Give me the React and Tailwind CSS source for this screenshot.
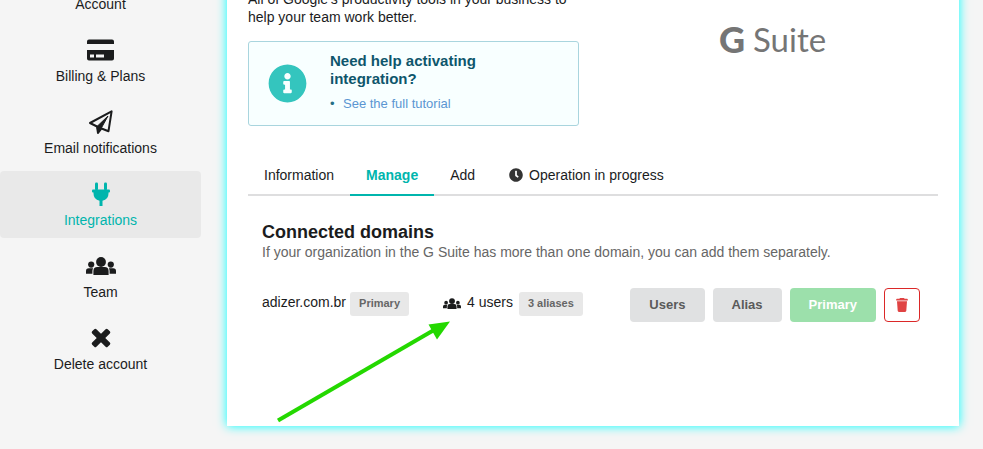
import { useState } from 'react';
import { FaClock, FaInfoCircle, FaUserAlt } from 'react-icons/fa';

function CardIcon({ className }) {
  return (
    <svg viewBox="0 0 27 22" fill="currentColor" className={className} aria-hidden="true">
      <path d="M0 5V2.5A2 2 0 0 1 2 .5h23a2 2 0 0 1 2 2V5z" />
      <path fillRule="evenodd" d="M0 11h27v8.500a2 2 0 0 1-2 2H2a2 2 0 0 1-2-2zM3 15.500v3h4v-3zM9 15.500v3h8v-3z" />
    </svg>
  );
}

function PlaneIcon({ className }) {
  return (
    <svg viewBox="0 0 24 24" fill="none" stroke="currentColor" strokeLinejoin="round" className={className} aria-hidden="true">
      <path d="M1 13 22.600 1.300 19.500 21.200 12.500 18.500 9 23 8 16.500z" strokeWidth="2" />
      <path d="M8 16.500 19 6 12.200 18.300 9 23z" fill="currentColor" strokeWidth="1" />
    </svg>
  );
}

function PlugIcon({ className }) {
  return (
    <svg viewBox="0 0 24 24" fill="currentColor" className={className} aria-hidden="true">
      <rect x="6" y="0.400" width="3" height="8" rx="1.300" />
      <rect x="15" y="0.400" width="3" height="8" rx="1.300" />
      <rect x="3" y="7.400" width="18" height="3" rx="1" />
      <path d="M4.500 10h15v1.500a7.400 7.400 0 0 1-6 7.200V24h-3v-5.300a7.400 7.400 0 0 1-6-7.200z" />
    </svg>
  );
}

function CrossIcon({ className }) {
  return (
    <svg viewBox="0 0 24 24" fill="currentColor" className={className} aria-hidden="true">
      <rect x="1" y="9" width="22" height="6" rx="1.500" transform="rotate(45 12 12)" />
      <rect x="1" y="9" width="22" height="6" rx="1.500" transform="rotate(-45 12 12)" />
    </svg>
  );
}

function TeamIcon({ className }) {
  return (
    <svg viewBox="0 0 30 18" fill="currentColor" className={className} aria-hidden="true">
      <circle cx="15" cy="5" r="4.9" />
      <path d="M7.4 18V14a4 4 0 0 1 4-4h7.2a4 4 0 0 1 4 4v4z" />
      <circle cx="5.2" cy="7.6" r="3.1" />
      <path d="M0 16.8V14a2.8 2.8 0 0 1 2.8-2.8h4.4A5.6 5.6 0 0 0 6.4 14v2.8z" />
      <circle cx="24.8" cy="7.6" r="3.1" />
      <path d="M30 16.8V14a2.8 2.8 0 0 0-2.8-2.8h-4.4a5.6 5.6 0 0 1 .8 2.8v2.8z" />
    </svg>
  );
}

function TrashIcon({ className }) {
  return (
    <svg viewBox="0 0 12 14" fill="currentColor" className={className} aria-hidden="true">
      <path d="M4 0h4l.6.8H11a.8.8 0 0 1 .8.800V2.500H.2V1.600A.8.800 0 0 1 1 .8h2.400z" />
      <path d="M1 3.300h10l-.7 9.500a1.200 1.200 0 0 1-1.200 1.100H2.900a1.200 1.200 0 0 1-1.200-1.100z" />
    </svg>
  );
}

const menuItems = [
  { id: 'account', label: 'Account', icon: <FaUserAlt className="w-6 h-6" /> },
  { id: 'billing', label: 'Billing & Plans', icon: <CardIcon className="w-[27px] h-[22px]" /> },
  { id: 'email', label: 'Email notifications', icon: <PlaneIcon className="w-6 h-6" /> },
  { id: 'integrations', label: 'Integrations', icon: <PlugIcon className="w-6 h-6" /> },
  { id: 'team', label: 'Team', icon: <TeamIcon className="w-[30px] h-[18px]" /> },
  { id: 'delete', label: 'Delete account', icon: <CrossIcon className="w-6 h-6" /> }
];

const tabs = [
  { id: 'information', label: 'Information' },
  { id: 'manage', label: 'Manage' },
  { id: 'add', label: 'Add' },
  { id: 'progress', label: 'Operation in progress', icon: FaClock }
];

const domains = [{ name: 'adizer.com.br', primary: true, users: 4, aliases: 3 }];

function Badge({ children }) {
  return (
    <span className="inline-flex items-center h-6 px-[9px] rounded-[3px] bg-[#e8e8e8] text-[11px] font-bold text-[#666]">
      {children}
    </span>
  );
}

function App() {
  const [activeTab, setActiveTab] = useState('manage');

  return (
    <div className="flex items-start h-screen overflow-hidden bg-[#f5f5f5] font-['Liberation_Sans',Arial,sans-serif] text-sm text-[#1b1c1d]">
      {/* Settings menu */}
      <nav className="w-[201px] shrink-0 -mt-[45px] flex flex-col gap-[5px]">
        {menuItems.map((item) => (
          <a
            key={item.id}
            href={`#${item.id}`}
            className={`flex flex-col items-center h-[67px] pt-[11px] rounded ${item.id === 'integrations' ? 'bg-[#e9e9e9] text-[#00b5ad]' : ''}`}
          >
            <span className="flex items-center justify-center h-6">{item.icon}</span>
            <span className="mt-1 leading-5">{item.label}</span>
          </a>
        ))}
      </nav>

      <main className="relative flex-1 min-w-0 ml-[26px] mr-6 -mt-5 pt-[10px] pb-[104px] px-[21px] bg-white shadow-[0_0_10px_aqua]">
        <div className="grid grid-cols-2 gap-7 mb-[30px]">
          <div>
            <p className="leading-[18px]">All of Google's productivity tools in your business to help your team work better.</p>

            <div className="flex items-center mt-[15px] pl-[19px] pr-8 pt-[10px] pb-[11px] rounded-[3px] border border-[#a9d5de] bg-[#f8ffff]">
              <FaInfoCircle className="w-[39px] h-[39px] shrink-0 text-[#34c5be]" />
              <div className="ml-[23px]">
                <h3 className="text-[15px] leading-[18px] font-bold text-[#0e566c]">Need help activating integration?</h3>
                <ul className="mt-[6px] text-[13px] leading-5 text-[#276f86]">
                  <li className="flex">
                    <span className="w-[13px]">•</span>
                    <a href="#tutorial" className="text-[#5b96d2]">See the full tutorial</a>
                  </li>
                </ul>
              </div>
            </div>
          </div>

          <div className="flex items-center justify-center h-[98px] gap-2 font-[Lato,sans-serif] text-[#757575]">
            <span className="text-4xl leading-9 font-black">G</span>
            <span className="text-[33px] leading-9">Suite</span>
          </div>
        </div>

        {/* Tabs */}
        <div role="tablist" className="flex h-10 border-b-2 border-[#dededf]">
          {tabs.map((tab) => (
            <button
              key={tab.id}
              type="button"
              role="tab"
              aria-selected={activeTab === tab.id}
              onClick={() => setActiveTab(tab.id)}
              className={`flex items-center h-10 px-4 border-b-2 ${activeTab === tab.id ? 'border-[#00b5ad] font-bold text-[#00b5ad]' : 'border-transparent'}`}
            >
              {tab.icon && <tab.icon className="w-[14px] h-[14px] ml-0.5 mr-[6px] text-[#333]" />}
              {tab.label}
            </button>
          ))}
        </div>

        {/* Connected domains */}
        <section className="pt-[25px] pl-[14px] pr-[18px]">
          <h2 className="text-lg leading-[22px] font-bold">Connected domains</h2>
          <p className="leading-[18px] text-[#666]">
            If your organization in the G Suite has more than one domain, you can add them separately.
          </p>

          <ul className="mt-[27px]">
            {domains.map((domain) => (
              <li key={domain.name} className="flex items-center">
                <div className="flex items-center gap-1 w-[181px] pb-0.5">
                  <span className="pb-1">{domain.name}</span>
                  {domain.primary && <Badge>Primary</Badge>}
                </div>
                <div className="flex items-center gap-[6px] pb-0.5">
                  <TeamIcon className="w-[18px] h-[11px] mb-0.5" />
                  <span className="pb-1">{domain.users} users</span>
                  <Badge>{domain.aliases} aliases</Badge>
                </div>
                <div className="flex gap-2 ml-auto text-[13px] font-bold">
                  <button type="button" className="h-[34px] px-[19px] rounded bg-[#e0e1e2] text-[#5a5a5a]">Users</button>
                  <button type="button" className="h-[34px] px-[19px] rounded bg-[#e0e1e2] text-[#5a5a5a]">Alias</button>
                  <button type="button" className="h-[34px] px-[19px] rounded bg-[#9ce0ab] text-white">Primary</button>
                  <button
                    type="button"
                    aria-label="Remove domain"
                    className="flex items-center justify-center w-9 h-[34px] rounded border border-[#db2828] text-[#e04343]"
                  >
                    <TrashIcon className="w-3 h-[14px]" />
                  </button>
                </div>
              </li>
            ))}
          </ul>
        </section>

        {/* Arrow pointing at the user count */}
        <svg viewBox="0 0 176 104" className="absolute left-[49px] bottom-[2px] w-[176px] h-[104px]" aria-hidden="true">
          <path d="M2 100.5 158 10" stroke="#24d800" strokeWidth="4" fill="none" />
          <path d="M174 1.5 152.5 4.5 161 19.5z" fill="#24d800" />
        </svg>
      </main>
    </div>
  );
}

export default App;
